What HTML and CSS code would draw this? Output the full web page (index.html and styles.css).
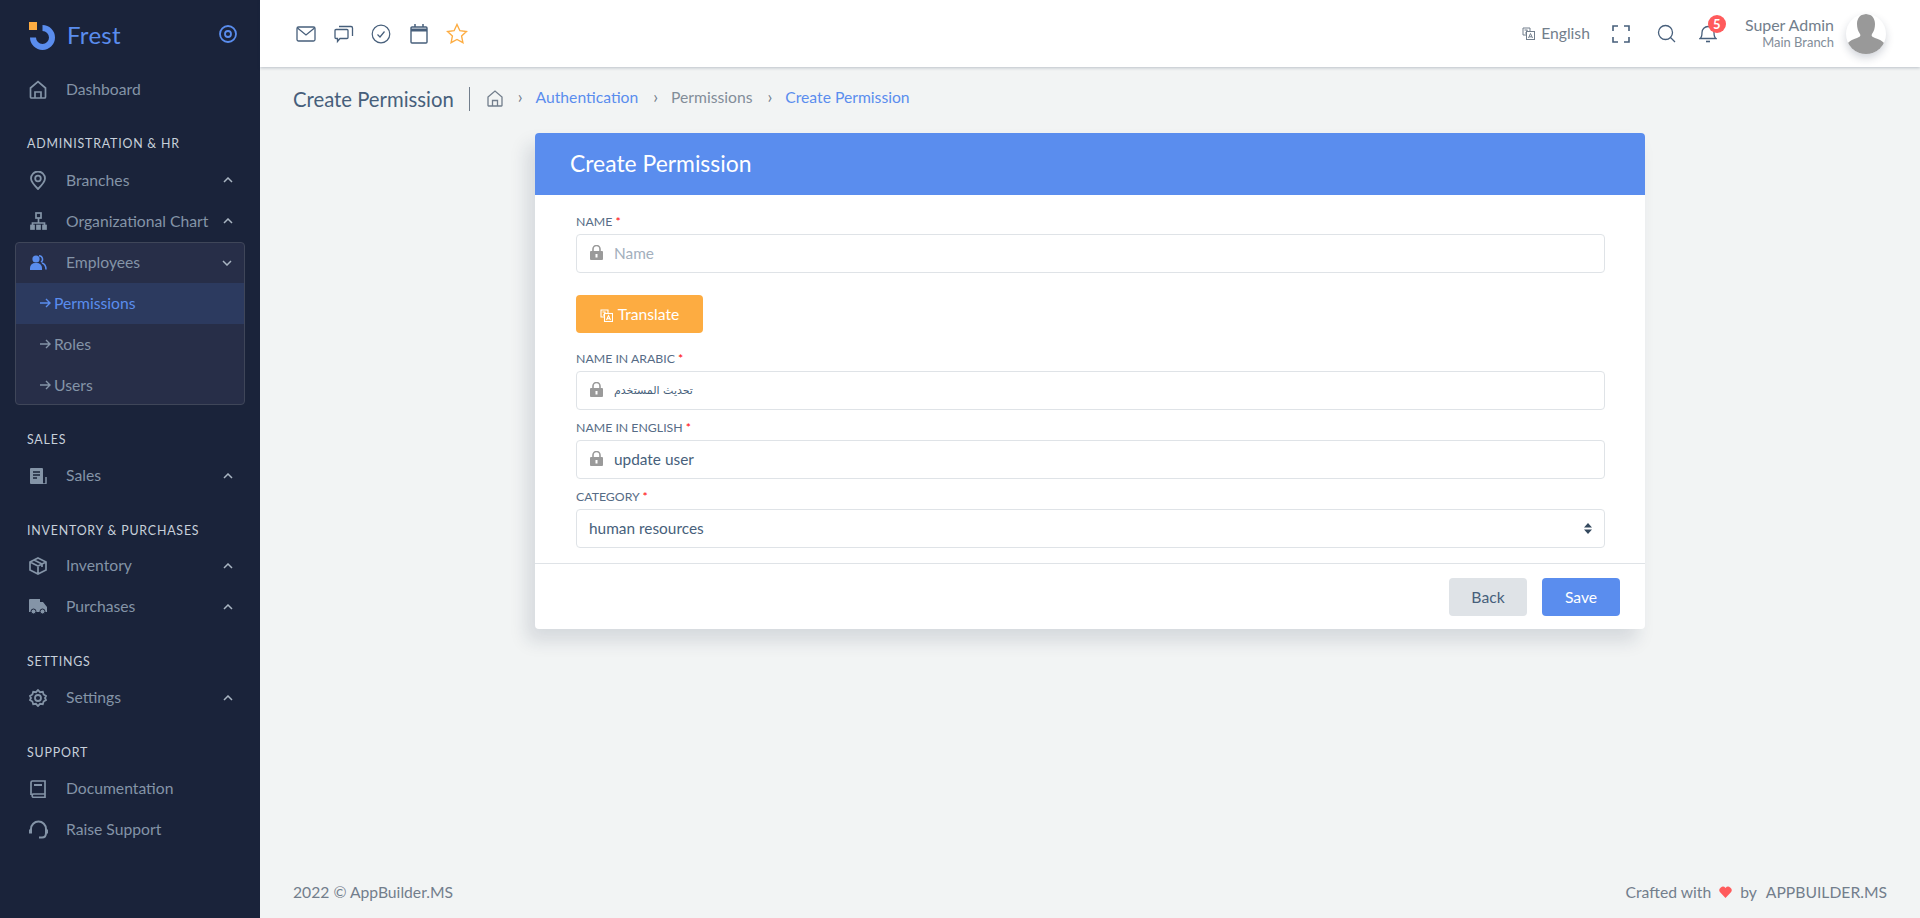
FILE: index.html
```html
<!DOCTYPE html>
<html lang="en">
  <head>
    <meta http-equiv="Content-Type" content="text/html;charset=UTF-8" />
    <meta name="viewport" content="width=device-width, initial-scale=1.0" />
    <title>Create Permission</title>
    <link rel="stylesheet" href="styles.css">
  </head>
  <body>
    <aside class="sidebar">
      <div class="brand">
        <svg class="brand-logo" width="28" height="28" viewBox="0 0 28 28">
          <path d="M14.5 6a9.5 9.5 0 1 1-9.5 9.5" fill="none" stroke="#5a8dee" stroke-width="6"/>
          <rect x="1" y="0" width="8" height="8" fill="#fdac41"/>
        </svg>
        <span class="brand-name">Frest</span>
        <svg class="brand-toggle" width="20" height="20" viewBox="0 0 20 20" fill="none" stroke="#5a8dee">
          <circle cx="10" cy="10" r="8" stroke-width="1.8"/>
          <circle cx="10" cy="10" r="3" stroke-width="1.8"/>
        </svg>
      </div>

      <a class="menu-item">
        <span class="menu-icon"><svg width="18" height="19" viewBox="0 0 18 19" fill="none" stroke="#8494a7" stroke-width="1.7"><path d="M1.5 8 9 1.5 16.500 8v9a1 1 0 0 1-1 1h-13a1 1 0 0 1-1-1z"/><path d="M6 18v-6h6v6"/></svg></span>
        <span class="menu-text">Dashboard</span>
      </a>

      <div class="menu-label">Administration &amp; HR</div>
      <a class="menu-item">
        <span class="menu-icon"><svg width="16" height="19" viewBox="0 0 16 19" fill="none" stroke="#8494a7" stroke-width="1.8"><path d="M8 18C4 14 1 11 1 7.500a7 7 0 0 1 14 0C15 11 12 14 8 18z"/><circle cx="8" cy="7.500" r="2.800"/></svg></span>
        <span class="menu-text">Branches</span>
        <svg class="chevron" width="10" height="6" viewBox="0 0 10 6" fill="none" stroke="#a9b5c2" stroke-width="1.500"><path d="M1 5l4-4 4 4"/></svg>
      </a>
      <a class="menu-item">
        <span class="menu-icon"><svg width="17" height="18" viewBox="0 0 17 18" fill="none" stroke="#8494a7" stroke-width="1.700"><rect x="6" y="1" width="5" height="5"/><path d="M8.500 6v5M2.500 13v-2h12v2"/><rect x="1" y="13.500" width="3" height="3.500" fill="#8494a7"/><rect x="7" y="13.500" width="3" height="3.500" fill="#8494a7"/><rect x="13" y="13.500" width="3" height="3.500" fill="#8494a7"/></svg></span>
        <span class="menu-text">Organizational Chart</span>
        <svg class="chevron" width="10" height="6" viewBox="0 0 10 6" fill="none" stroke="#a9b5c2" stroke-width="1.500"><path d="M1 5l4-4 4 4"/></svg>
      </a>

      <div class="menu-group">
        <a class="menu-item">
          <span class="menu-icon"><svg width="17" height="15" viewBox="0 0 17 15"><circle cx="6" cy="4" r="3.600" fill="#5a8dee"/><path d="M0 15v-2a5 5 0 0 1 5-5h2a5 5 0 0 1 5 5v2z" fill="#5a8dee"/><path d="M9 .8a3.500 3.500 0 0 1 2 6.400M12 8c2.500.8 4 2.800 4 6.500" fill="none" stroke="#5a8dee" stroke-width="1.500"/></svg></span>
          <span class="menu-text">Employees</span>
          <svg class="chevron" width="10" height="6" viewBox="0 0 10 6" fill="none" stroke="#a9b5c2" stroke-width="1.500"><path d="M1 1l4 4 4-4"/></svg>
        </a>
        <a class="sub-item active"><svg class="sub-arrow" width="11" height="10" viewBox="0 0 11 10" fill="none" stroke="#5a8dee" stroke-width="1.400"><path d="M0 5h10M6 1l4 4-4 4"/></svg><span class="menu-text">Permissions</span></a>
        <a class="sub-item"><svg class="sub-arrow" width="11" height="10" viewBox="0 0 11 10" fill="none" stroke="#8494a7" stroke-width="1.400"><path d="M0 5h10M6 1l4 4-4 4"/></svg><span class="menu-text">Roles</span></a>
        <a class="sub-item"><svg class="sub-arrow" width="11" height="10" viewBox="0 0 11 10" fill="none" stroke="#8494a7" stroke-width="1.400"><path d="M0 5h10M6 1l4 4-4 4"/></svg><span class="menu-text">Users</span></a>
      </div>

      <div class="menu-label">Sales</div>
      <a class="menu-item">
        <span class="menu-icon"><svg width="18" height="16" viewBox="0 0 18 16"><path d="M1 1a1 1 0 0 1 1-1h11a1 1 0 0 1 1 1v15H2a1 1 0 0 1-1-1z" fill="#8494a7"/><path d="M4 4h7M4 7h7M4 10h4" stroke="#1a233a" stroke-width="1.300"/><path d="M14 16h2a1 1 0 0 0 1-1V9" fill="none" stroke="#8494a7" stroke-width="1.500"/></svg></span>
        <span class="menu-text">Sales</span>
        <svg class="chevron" width="10" height="6" viewBox="0 0 10 6" fill="none" stroke="#a9b5c2" stroke-width="1.500"><path d="M1 5l4-4 4 4"/></svg>
      </a>

      <div class="menu-label menu-label-tight">Inventory &amp; Purchases</div>
      <a class="menu-item">
        <span class="menu-icon"><svg width="18" height="18" viewBox="0 0 18 18" fill="none" stroke="#8494a7" stroke-width="1.700"><path d="M9 1l8 4v8l-8 4-8-4V5zM1 5l8 4 8-4M9 9v8M5 3l8 4v3"/></svg></span>
        <span class="menu-text">Inventory</span>
        <svg class="chevron" width="10" height="6" viewBox="0 0 10 6" fill="none" stroke="#a9b5c2" stroke-width="1.500"><path d="M1 5l4-4 4 4"/></svg>
      </a>
      <a class="menu-item">
        <span class="menu-icon"><svg width="18" height="15" viewBox="0 0 18 15"><path d="M0 1a1 1 0 0 1 1-1h10v3h3l4 5v5H0z" fill="#8494a7"/><circle cx="4.500" cy="12.500" r="2.500" fill="#8494a7" stroke="#1a233a"/><circle cx="13.500" cy="12.500" r="2.500" fill="#8494a7" stroke="#1a233a"/></svg></span>
        <span class="menu-text">Purchases</span>
        <svg class="chevron" width="10" height="6" viewBox="0 0 10 6" fill="none" stroke="#a9b5c2" stroke-width="1.500"><path d="M1 5l4-4 4 4"/></svg>
      </a>

      <div class="menu-label">Settings</div>
      <a class="menu-item">
        <span class="menu-icon"><svg width="18" height="18" viewBox="0 0 18 18" fill="none" stroke="#8494a7" stroke-width="1.800"><path d="M9 1l2 2.200 2.800-.4.800 2.700 2.400 1.500L16 9l1 2-2.400 1.500-.8 2.700-2.800-.4L9 17l-2-2.200-2.800.4-.8-2.700L1 11l1-2-1-2 2.400-1.500.8-2.700 2.800.4z"/><circle cx="9" cy="9" r="3"/></svg></span>
        <span class="menu-text">Settings</span>
        <svg class="chevron" width="10" height="6" viewBox="0 0 10 6" fill="none" stroke="#a9b5c2" stroke-width="1.500"><path d="M1 5l4-4 4 4"/></svg>
      </a>

      <div class="menu-label">Support</div>
      <a class="menu-item">
        <span class="menu-icon"><svg width="16" height="18" viewBox="0 0 16 18" fill="none" stroke="#8494a7" stroke-width="1.700"><path d="M15 14H3a2 2 0 0 0 0 3.300h12V1H2.500A1.500 1.500 0 0 0 1 2.500V15"/><path d="M4 5h8" stroke-width="2"/></svg></span>
        <span class="menu-text">Documentation</span>
      </a>
      <a class="menu-item">
        <span class="menu-icon"><svg width="19" height="19" viewBox="0 0 19 19" fill="none" stroke="#8494a7" stroke-width="2"><path d="M2 13V9a7.500 7.500 0 0 1 15 0v4"/><path d="M1.500 9.500v4M17.500 9.500v4" stroke-width="3"/><path d="M17 13c0 3-1.500 4.500-4 4.500h-3"/></svg></span>
        <span class="menu-text">Raise Support</span>
      </a>
    </aside>

    <div class="page">
      <header class="topbar">
        <div class="topbar-icons">
          <svg width="20" height="18" viewBox="0 0 20 18" fill="none" stroke="#475f7b" stroke-width="1.300"><rect x="1" y="2" width="18" height="14" rx="1.500"/><path d="M1.500 3l8.500 7 8.500-7"/></svg>
          <svg width="20" height="20" viewBox="0 0 20 20" fill="none" stroke="#475f7b" stroke-width="1.300"><path d="M1 6.500a1 1 0 0 1 1-1h11a1 1 0 0 1 1 1v7a1 1 0 0 1-1 1H6l-2.500 3v-3H2a1 1 0 0 1-1-1z"/><path d="M5 2.500h12a1.500 1.500 0 0 1 1.500 1.500v8"/></svg>
          <svg width="20" height="20" viewBox="0 0 20 20" fill="none" stroke="#475f7b" stroke-width="1.200"><circle cx="10" cy="10" r="8.800"/><path d="M6.500 10.500l2.500 2.500 4.500-5.500"/></svg>
          <svg class="top-calendar" width="18" height="20" viewBox="0 0 18 20" fill="none" stroke="#475f7b" stroke-width="1.400"><rect x="1" y="3" width="16" height="16" rx="1"/><path d="M1 6h16" stroke-width="3"/><path d="M5 0v3M13 0v3" stroke-width="1.500"/></svg>
          <svg class="top-star" width="22" height="21" viewBox="0 0 22 21" fill="none" stroke="#fdac41" stroke-width="1.400"><path d="M11 1.500l2.900 6.200 6.600.8-4.900 4.600 1.300 6.600L11 16.500l-5.900 3.200 1.300-6.600-4.900-4.600 6.600-.8z"/></svg>
        </div>
        <div class="topbar-right">
          <span class="lang">
            <svg width="13" height="13" viewBox="0 0 13 13" fill="none" stroke="#727e8c" stroke-width="1"><path d="M8 4V1H1v7h3"/><rect x="4.500" y="4.500" width="8" height="8" fill="#fff"/><path d="M6.500 11l2-4.500 2 4.500M7.200 9.800h2.600"/><path d="M2.500 3h3M3 6.500c1-.5 2-1.800 2.200-3.500"/></svg>
            <span class="lang-text">English</span>
          </span>
          <svg class="top-tool" width="18" height="18" viewBox="0 0 18 18" fill="none" stroke="#475f7b" stroke-width="1.600"><path d="M1 6V1h5M12 1h5v5M17 12v5h-5M6 17H1v-5"/></svg>
          <svg class="top-tool" width="19" height="19" viewBox="0 0 19 19" fill="none" stroke="#475f7b" stroke-width="1.300"><circle cx="8.500" cy="8.500" r="7"/><path d="M13.500 13.500l4.500 4.500"/></svg>
          <span class="bell">
            <svg width="18" height="19" viewBox="0 0 18 19" fill="none" stroke="#475f7b" stroke-width="1.300"><path d="M1 14.500c1.500-1 2-2.500 2-6a6 6 0 0 1 12 0c0 3.500.5 5 2 6z"/><path d="M7 17.500h4" stroke-width="1.600"/></svg>
            <span class="badge">5</span>
          </span>
          <div class="user">
            <div class="user-name">Super Admin</div>
            <div class="user-branch">Main Branch</div>
          </div>
          <span class="avatar">
            <svg width="40" height="40" viewBox="0 0 40 40"><path d="M20 0c5.500 0 9 4 9 10 0 4-1 7-3 10-1 2 0 3 3 4 6 2 9 4 11 8a20 20 0 0 1-40 0c2-4 5-6 11-8 3-1 4-2 3-4-2-3-3-6-3-10 0-6 3.500-10 9-10z" fill="#999"/></svg>
          </span>
        </div>
      </header>

      <main class="content">
        <div class="crumbs">
          <h5 class="crumbs-title">Create Permission</h5>
          <svg class="crumbs-home" width="16" height="17" viewBox="0 0 16 17" fill="none" stroke="#727e8c" stroke-width="1.300"><path d="M1 7l7-6 7 6v8.500a.5.500 0 0 1-.5.500h-13a.5.500 0 0 1-.5-.5z"/><path d="M5.500 16v-5.500h5V16"/></svg>
          <span class="crumb-sep">&#8250;</span>
          <a class="crumb-link">Authentication</a>
          <span class="crumb-sep">&#8250;</span>
          <span class="crumb-plain">Permissions</span>
          <span class="crumb-sep">&#8250;</span>
          <a class="crumb-link">Create Permission</a>
        </div>

        <section class="card">
          <div class="card-head">Create Permission</div>
          <form class="card-body">
            <div class="field field-first">
              <label>Name <span class="req">*</span></label>
              <div class="input-wrap">
                <svg class="lock" width="13" height="15" viewBox="0 0 13 15"><path d="M3 6V4a3.500 3.500 0 0 1 7 0v2" fill="none" stroke="#9a9a9a" stroke-width="1.600"/><path d="M1 6h11a1 1 0 0 1 1 1v7a1 1 0 0 1-1 1H1a1 1 0 0 1-1-1V7a1 1 0 0 1 1-1z" fill="#9a9a9a"/><rect x="5.500" y="9" width="2" height="3.500" fill="#fff"/></svg>
                <input type="text" placeholder="Name" />
              </div>
            </div>

            <button type="button" class="btn btn-translate">
              <svg class="translate-icon" width="13" height="13" viewBox="0 0 13 13" fill="none" stroke="#fff" stroke-width="1.100"><path d="M8 4V1H1v7h3"/><rect x="4.500" y="4.500" width="8" height="8" fill="#fdac41"/><path d="M6.500 11l2-4.500 2 4.500M7.200 9.800h2.600"/><path d="M2.500 3h3M3 6.500c1-.5 2-1.800 2.200-3.500"/></svg>
              Translate
            </button>

            <div class="field">
              <label>Name in Arabic <span class="req">*</span></label>
              <div class="input-wrap">
                <svg class="lock" width="13" height="15" viewBox="0 0 13 15"><path d="M3 6V4a3.500 3.500 0 0 1 7 0v2" fill="none" stroke="#9a9a9a" stroke-width="1.600"/><path d="M1 6h11a1 1 0 0 1 1 1v7a1 1 0 0 1-1 1H1a1 1 0 0 1-1-1V7a1 1 0 0 1 1-1z" fill="#9a9a9a"/><rect x="5.500" y="9" width="2" height="3.500" fill="#fff"/></svg>
                <input class="input-ar" type="text" value="تحديث المستخدم" />
              </div>
            </div>

            <div class="field">
              <label>Name in English <span class="req">*</span></label>
              <div class="input-wrap">
                <svg class="lock" width="13" height="15" viewBox="0 0 13 15"><path d="M3 6V4a3.500 3.500 0 0 1 7 0v2" fill="none" stroke="#9a9a9a" stroke-width="1.600"/><path d="M1 6h11a1 1 0 0 1 1 1v7a1 1 0 0 1-1 1H1a1 1 0 0 1-1-1V7a1 1 0 0 1 1-1z" fill="#9a9a9a"/><rect x="5.500" y="9" width="2" height="3.500" fill="#fff"/></svg>
                <input type="text" value="update user" />
              </div>
            </div>

            <div class="field field-last">
              <label>Category <span class="req">*</span></label>
              <div class="select-wrap">
                <select>
                  <option>human resources</option>
                </select>
                <svg class="select-caret" width="8" height="11" viewBox="0 0 8 11" fill="#34495e"><path d="M4 0l4 4.400H0zM4 11L0 6.600h8z"/></svg>
              </div>
            </div>
          </form>
          <div class="card-foot">
            <button type="button" class="btn btn-back">Back</button>
            <button type="button" class="btn btn-save">Save</button>
          </div>
        </section>
      </main>

      <footer class="footer">
        <span>2022 &copy; AppBuilder.MS</span>
        <span class="footer-right">
          Crafted with
          <svg width="13" height="12" viewBox="0 0 12 11" fill="#ff5b5c"><path d="M6 11L.8 5.500A3.200 3.200 0 0 1 6 1.800a3.200 3.200 0 0 1 5.200 3.700z"/></svg>
          by
          <span class="footer-brand">APPBUILDER.MS</span>
        </span>
      </footer>
    </div>
  </body>
</html>
```

FILE: styles.css
```css
* {
  box-sizing: border-box;
}

body {
  font-family: 'Lato', 'Noto Sans', sans-serif;
  font-size: 15.7px;
  margin: 0;
  padding: 0;
  background-color: #f2f4f4;
  color: #475f7b;
  display: flex;
  min-height: 918px;
}

/* Sidebar */
.sidebar {
  width: 260px;
  flex-shrink: 0;
  background: #1a233a;
  color: #8494a7;
}

.brand {
  height: 68.5px;
  display: flex;
  align-items: center;
  padding: 0 22px 0 28px;
}

.brand-logo {
  margin-top: 3px;
}

.brand-name {
  color: #5a8dee;
  font-size: 24px;
  margin-left: 11px;
  letter-spacing: 0.3px;
}

.brand-toggle {
  margin-left: auto;
}

.menu-item {
  height: 41px;
  display: flex;
  align-items: center;
  padding: 0 27px 0 28px;
}

.menu-text {
  margin-bottom: 1px;
}

.menu-icon {
  width: 20px;
  margin-right: 18px;
  display: flex;
  justify-content: center;
}

.chevron {
  margin-left: auto;
}

.menu-label {
  height: 50px;
  padding: 26.500px 0 0 27px;
  font-size: 12.400px;
  line-height: 15px;
  letter-spacing: 0.800px;
  text-transform: uppercase;
  color: #c7d0da;
}

.menu-label-tight {
  height: 49px;
}

.menu-group {
  margin: 0.500px 15px 0;
  height: 163px;
  background: #272e48;
  border: 1px solid #3f4659;
  border-radius: 4px;
  overflow: hidden;
}

.menu-group .menu-item {
  height: 39.500px;
  padding: 0 12px 0 12px;
}

.sub-item {
  height: 41px;
  display: flex;
  align-items: center;
  padding-left: 24px;
}

.sub-item.active {
  background: #2c3a5f;
  color: #5a8dee;
}

.sub-arrow {
  margin-right: 3px;
}

/* Top bar */
.page {
  flex: 1;
  min-width: 0;
  display: flex;
  flex-direction: column;
}

.topbar {
  height: 67px;
  background: #fff;
  box-shadow: 0 1px 3px rgba(25, 42, 70, 0.25);
  display: flex;
  align-items: center;
  justify-content: space-between;
  padding: 0 34px 0 36px;
}

.topbar-icons {
  display: flex;
  align-items: center;
  gap: 17.500px;
}

.top-calendar {
  margin-left: 1px;
}

.top-star {
  margin-left: 1px;
}

.topbar-right {
  display: flex;
  align-items: center;
}

.lang {
  display: flex;
  align-items: center;
  gap: 6px;
  color: #727e8c;
}

.lang-text {
  margin-bottom: 2px;
}

.top-tool {
  margin-left: 22px;
}

.top-tool + .top-tool {
  margin-left: 27px;
}

.bell {
  position: relative;
  display: flex;
  margin-left: 23px;
}

.badge {
  position: absolute;
  top: -9px;
  right: -9px;
  width: 18px;
  height: 18px;
  border-radius: 50%;
  background: #ff5b5c;
  color: #fff;
  font-size: 13px;
  font-weight: 700;
  line-height: 18px;
  text-align: center;
}

.user {
  margin: -1px 0 0 28px;
  text-align: right;
  color: #727e8c;
}

.user-name {
  font-size: 15.950px;
  line-height: 18px;
}

.user-branch {
  font-size: 12.950px;
  line-height: 17px;
  color: #828d99;
}

.avatar {
  width: 40px;
  height: 40px;
  margin-left: 12px;
  border-radius: 50%;
  background: #fff;
  box-shadow: 0 4px 8px rgba(25, 42, 70, 0.2);
  overflow: hidden;
  display: block;
}

/* Breadcrumb */
.content {
  padding: 0 33px;
}

.crumbs {
  height: 66px;
  padding-bottom: 3px;
  display: flex;
  align-items: center;
}

.crumbs-title {
  margin: 0;
  padding-right: 15px;
  border-right: 1px solid #727e8c;
  font-size: 20.300px;
  font-weight: 400;
  line-height: 24px;
}

.crumbs-home {
  margin-left: 17px;
}

.crumb-sep {
  margin: 0 13px 4px 15px;
  color: #727e8c;
  font-size: 17px;
}

.crumb-link {
  margin-bottom: 4px;
  color: #5a8dee;
}

.crumb-plain {
  margin-bottom: 4px;
  color: #828d99;
}

/* Card */
.card {
  width: 1110px;
  margin: 0 auto;
  background: #fff;
  border-radius: 4px;
  box-shadow: -8px 12px 18px 0 rgba(25, 42, 70, 0.13);
}

.card-head {
  height: 62px;
  padding: 0 0 2px 35px;
  display: flex;
  align-items: center;
  background: #5a8dee;
  color: #fff;
  font-size: 22.900px;
  border-radius: 4px 4px 0 0;
}

.card-body {
  padding: 20px 40px 0 41px;
}

.field {
  margin-bottom: 11px;
}

.field-first {
  margin-bottom: 22px;
}

.field-last {
  margin-bottom: 15px;
}

label {
  display: block;
  margin: -1px 0 5px;
  font-size: 12.300px;
  line-height: 15px;
  text-transform: uppercase;
  color: #566c86;
}

.req {
  color: #ff0000;
}

.input-wrap,
.select-wrap {
  position: relative;
}

.lock {
  position: absolute;
  left: 14px;
  top: 11px;
}

input,
select {
  width: 100%;
  height: 39px;
  border: 1px solid #dfe3e7;
  border-radius: 4px;
  background: #fff;
  color: #475f7b;
  font-family: inherit;
  font-size: 15.400px;
  outline: none;
}

input {
  padding: 0 12px 2px 37px;
}

input::placeholder {
  color: #a3afbd;
  opacity: 1;
}

.input-ar {
  padding-bottom: 0;
  font-family: 'DejaVu Sans', sans-serif;
  font-size: 11px;
}

select {
  padding: 0 12px 2px;
  appearance: none;
}

.select-caret {
  position: absolute;
  right: 13px;
  top: 14px;
}

.btn {
  height: 38px;
  border: none;
  border-radius: 4px;
  font-family: inherit;
  font-size: 15.700px;
  cursor: pointer;
}

.btn-translate {
  width: 127px;
  margin-bottom: 19px;
  display: flex;
  align-items: center;
  justify-content: center;
  gap: 5px;
  background: #fdac41;
  color: #fff;
}

.translate-icon {
  margin-top: 3px;
}

.btn-back,
.btn-save {
  width: 78px;
}

.btn-back {
  background: #dfe3e7;
  color: #475f7b;
}

.btn-save {
  background: #5a8dee;
  color: #fff;
}

.card-foot {
  border-top: 1px solid #dfe3e7;
  padding: 14px 25px 13px;
  display: flex;
  justify-content: flex-end;
  gap: 15px;
}

/* Footer */
.footer {
  margin-top: auto;
  height: 52px;
  padding: 0 33px;
  display: flex;
  align-items: center;
  justify-content: space-between;
  color: #727e8c;
}

.footer-right {
  display: flex;
  align-items: center;
  gap: 8px;
}

.footer-brand {
  margin-left: 1px;
}
```
